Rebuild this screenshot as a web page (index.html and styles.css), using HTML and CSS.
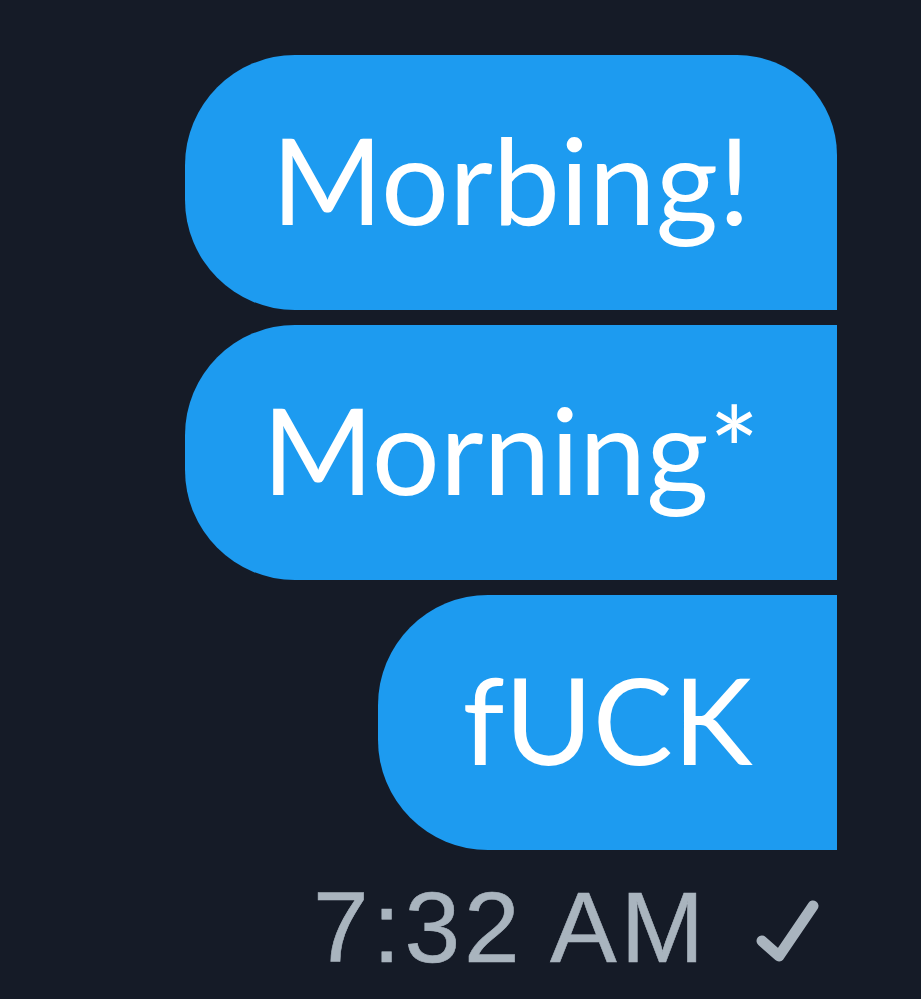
FILE: index.html
```html
<!DOCTYPE html>
<html>
<head>
<meta charset="utf-8">
<link rel="stylesheet" href="styles.css">
</head>
<body>
<div class="thread">
  <div class="bubble first">Morbing!</div>
  <div class="bubble middle">Morning*</div>
  <div class="bubble last short">fUCK</div>
  <div class="meta">
    <span class="time">7:32 AM</span>
    <svg class="check" width="66" height="66" viewBox="0 0 66 66" aria-hidden="true">
      <path d="M9 43 L26 58 L60 8" fill="none" stroke="#a9b4be" stroke-width="11" stroke-linecap="round" stroke-linejoin="round"/>
    </svg>
  </div>
</div>
</body>
</html>
```
FILE: styles.css
```css
html, body {
  margin: 0;
  padding: 0;
  background: #151b27;
}
.thread {
  display: flex;
  flex-direction: column;
  align-items: flex-end;
  gap: 15px;
  padding: 55px 84px 0 0;
}
.bubble {
  box-sizing: border-box;
  height: 255px;
  width: 652px;
  display: flex;
  align-items: center;
  justify-content: center;
  background: #1d9bf0;
  color: #ffffff;
  font-family: "Lato", "Inter", sans-serif;
  font-size: 120px;
  line-height: 1;
  padding-bottom: 8px;
}
.first {
  border-radius: 110px 100px 0 110px;
}
.middle {
  border-radius: 110px 0 0 110px;
}
.last {
  border-radius: 110px 0 0 110px;
}
.short {
  width: 459px;
}
.meta {
  display: flex;
  align-items: center;
  gap: 45px;
  margin-top: 12px;
  padding-right: 18px;
}
.time {
  font-family: "Liberation Sans", Arial, sans-serif;
  font-size: 100px;
  letter-spacing: 4px;
  line-height: 1;
  color: #a9b4be;
  -webkit-text-stroke: 0.6px #a9b4be;
}
.check {
  display: block;
  margin-top: 8px;
}
```
